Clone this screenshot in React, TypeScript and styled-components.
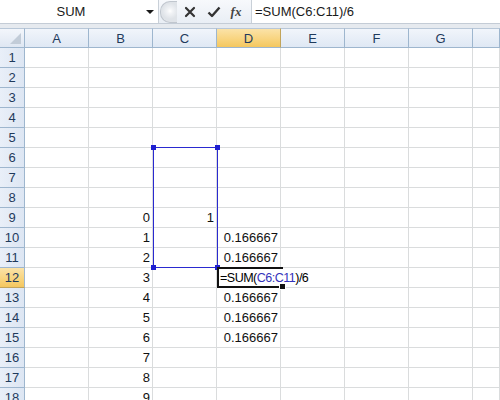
import React from "react";
import styled, { createGlobalStyle } from "styled-components";

const Global = createGlobalStyle`
  html, body { margin: 0; padding: 0; background: #ffffff; overflow: hidden; }
  body { font-family: "Liberation Sans", Arial, sans-serif; }
`;

const Page = styled.div`
  width: 500px;
  height: 400px;
  overflow: hidden;
  display: flex;
  flex-direction: column;
  background: #ffffff;
`;

const FormulaBar = styled.div`
  height: 24px;
  flex-shrink: 0;
  display: flex;
  align-items: stretch;
  background: linear-gradient(#f7f9fc, #e9eef5);
  border-bottom: 1px solid #c4ccd6;
  box-sizing: border-box;
`;

const NameBox = styled.div`
  width: 158px;
  background: #ffffff;
  border-right: 1px solid #c9d0d8;
  display: flex;
  align-items: center;
  position: relative;
  font-size: 13px;
  color: #1a1a1a;
`;

const NameText = styled.span`
  flex: 1;
  text-align: center;
  padding-right: 4px;
`;

const DropArrow = styled.span`
  width: 0;
  height: 0;
  border-left: 4px solid transparent;
  border-right: 4px solid transparent;
  border-top: 4px solid #1a1a1a;
  margin-right: 4px;
`;

const Buttons = styled.div`
  width: 92px;
  display: flex;
  align-items: center;
  position: relative;
`;

const Grip = styled.div`
  width: 16px;
  height: 20px;
  margin-left: 1px;
  border-radius: 10px 0 0 10px;
  border: 1px solid #c0c6ce;
  border-right: none;
  background: radial-gradient(circle at 9px 9px, #ffffff 0, #f0f2f5 3px, #dfe3e8 8px);
`;

const IconBtn = styled.div<{ $w: number }>`
  width: ${(p) => p.$w}px;
  display: flex;
  justify-content: center;
  align-items: center;
  color: #333;
`;

const Fx = styled.span`
  font-family: "Liberation Serif", "Times New Roman", serif;
  font-style: italic;
  font-weight: bold;
  font-size: 13px;
  color: #444;
`;

const FormulaInput = styled.div`
  flex: 1;
  background: #ffffff;
  border-left: 1px solid #c9d0d8;
  display: flex;
  align-items: center;
  padding-left: 3px;
  font-size: 13px;
  color: #1a1a1a;
`;

const Gap = styled.div`
  height: 4px;
  flex-shrink: 0;
  background: #e6eaef;
`;

const SheetWrap = styled.div`
  position: relative;
  flex: 1 0 auto;
`;

const Sheet = styled.div`
  display: grid;
  grid-template-columns: 25px repeat(7, 64px) 1fr;
  grid-auto-rows: 20px;
  font-size: 13px;
  color: #111;
`;

const Corner = styled.div`
  background: linear-gradient(#f3f6fb, #dfe7f2);
  border-right: 1px solid #9eb6ce;
  border-bottom: 1px solid #9eb6ce;
  border-top: 1px solid #b8c7d8;
  box-sizing: border-box;
  position: relative;
  &::after {
    content: "";
    position: absolute;
    right: 3px;
    bottom: 3px;
    width: 0;
    height: 0;
    border-left: 11px solid transparent;
    border-bottom: 11px solid #c2ccd8;
  }
`;

const ColHead = styled.div<{ $active?: boolean }>`
  background: ${(p) =>
    p.$active
      ? "linear-gradient(#fbe3a8, #f8d37c 60%, #f4c75f)"
      : "linear-gradient(#f1f5fb, #dfe8f4)"};
  border-right: 1px solid ${(p) => (p.$active ? "#c2a45a" : "#9eb6ce")};
  border-bottom: 1px solid #9eb6ce;
  border-top: 1px solid #b8c7d8;
  box-sizing: border-box;
  display: flex;
  align-items: center;
  justify-content: center;
  color: #1f3a5c;
  font-size: 13px;
`;

const RowHead = styled.div<{ $active?: boolean }>`
  background: ${(p) =>
    p.$active
      ? "linear-gradient(#fbe3a8, #f8d37c 60%, #f4c75f)"
      : "linear-gradient(90deg, #e9eff8, #dde6f3)"};
  border-right: 1px solid #9eb6ce;
  border-bottom: 1px solid ${(p) => (p.$active ? "#c2a45a" : "#9eb6ce")};
  box-sizing: border-box;
  display: flex;
  align-items: center;
  justify-content: center;
  color: #1f3a5c;
  font-size: 13px;
`;

const Cell = styled.div`
  border-right: 1px solid #dadcdd;
  border-bottom: 1px solid #dadcdd;
  box-sizing: border-box;
  display: flex;
  align-items: center;
  justify-content: flex-end;
  padding-right: 2px;
  white-space: nowrap;
`;

const RangeBox = styled.div`
  position: absolute;
  border: 1px solid #2a2ad0;
  box-sizing: border-box;
  pointer-events: none;
`;

const Handle = styled.span<{ $x: "l" | "r"; $y: "t" | "b" }>`
  position: absolute;
  width: 5px;
  height: 5px;
  background: #1f1fd0;
  ${(p) => (p.$x === "l" ? "left: -3px;" : "right: -3px;")}
  ${(p) => (p.$y === "t" ? "top: -3px;" : "bottom: -3px;")}
`;

const EditBox = styled.div`
  position: absolute;
  left: 217px;
  top: 239px;
  width: 66px;
  height: 21px;
  border: 2px solid #111;
  border-right: none;
  background: #fff;
  box-sizing: border-box;
  display: flex;
  align-items: center;
  padding-left: 1px;
  font-size: 12.5px;
  letter-spacing: -0.5px;
  white-space: nowrap;
  overflow: visible;
`;

const FillHandle = styled.span`
  position: absolute;
  right: -3px;
  bottom: -4px;
  width: 5px;
  height: 5px;
  background: #111;
  border: 1px solid #fff;
`;

const Ref = styled.span`
  color: #3333bb;
`;

const cols = ["A", "B", "C", "D", "E", "F", "G", ""];

const data: Record<string, string> = {
  "9B": "0",
  "10B": "1",
  "11B": "2",
  "12B": "3",
  "13B": "4",
  "14B": "5",
  "15B": "6",
  "16B": "7",
  "17B": "8",
  "18B": "9",
  "9C": "1",
  "10D": "0.166667",
  "11D": "0.166667",
  "13D": "0.166667",
  "14D": "0.166667",
  "15D": "0.166667",
};

export default function App() {
  const rows = Array.from({ length: 18 }, (_, i) => i + 1);
  return (
    <Page>
      <Global />
      <FormulaBar>
        <NameBox>
          <NameText>SUM</NameText>
          <DropArrow />
        </NameBox>
        <Buttons>
          <Grip />
          <IconBtn $w={26}>
            <svg width="12" height="12" viewBox="0 0 12 12">
              <path d="M2 2 L10 10 M10 2 L2 10" stroke="#333" strokeWidth="2.2" strokeLinecap="round" />
            </svg>
          </IconBtn>
          <IconBtn $w={22}>
            <svg width="14" height="12" viewBox="0 0 14 12">
              <path d="M1.5 6.5 L5 10 L12.5 1.5" stroke="#333" strokeWidth="2.4" fill="none" strokeLinejoin="round" />
            </svg>
          </IconBtn>
          <IconBtn $w={22}>
            <Fx>fx</Fx>
          </IconBtn>
        </Buttons>
        <FormulaInput>=SUM(C6:C11)/6</FormulaInput>
      </FormulaBar>
      <Gap />
      <SheetWrap>
        <Sheet>
          <Corner />
          {cols.map((c, i) => (
            <ColHead key={i} $active={c === "D"}>
              {c}
            </ColHead>
          ))}
          {rows.map((r) => (
            <React.Fragment key={r}>
              <RowHead $active={r === 12}>{r}</RowHead>
              {cols.map((c, i) => (
                <Cell key={i}>{r === 12 && c === "D" ? "" : data[`${r}${c}`] ?? ""}</Cell>
              ))}
            </React.Fragment>
          ))}
        </Sheet>
        <RangeBox style={{ left: 153, top: 119, width: 65, height: 121 }}>
          <Handle $x="l" $y="t" />
          <Handle $x="r" $y="t" />
          <Handle $x="l" $y="b" />
          <Handle $x="r" $y="b" />
        </RangeBox>
        <EditBox>
          =SUM(<Ref>C6:C11</Ref>)/6
          <FillHandle />
        </EditBox>
      </SheetWrap>
    </Page>
  );
}
